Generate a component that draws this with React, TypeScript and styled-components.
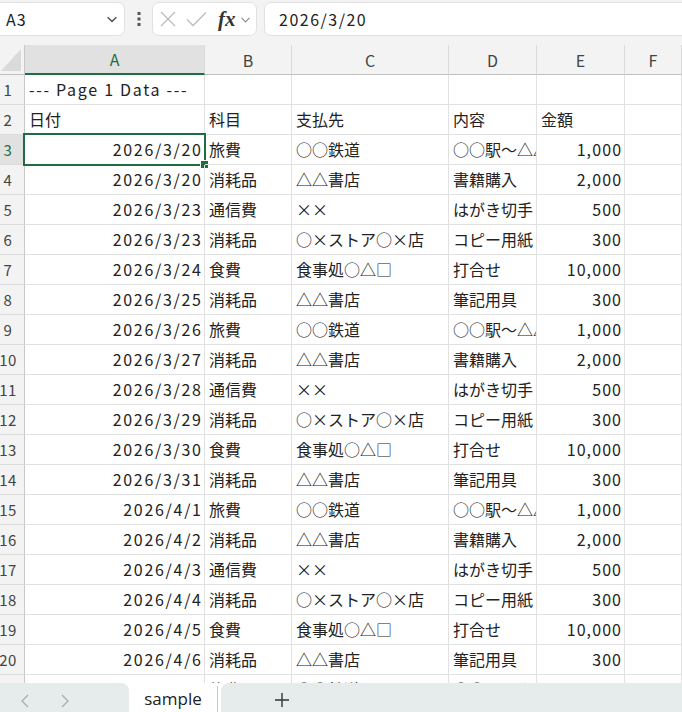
import styled, { createGlobalStyle } from "styled-components";

const GlobalStyle = createGlobalStyle`
  body {
    margin: 0;
    background: #fff;
    font-family: "Noto Sans CJK JP", "Noto Sans", sans-serif;
  }
  * { box-sizing: border-box; }
`;

const GREEN = "#1e6e43";

const Page = styled.div`
  width: 682px;
  height: 712px;
  overflow: hidden;
  display: flex;
  flex-direction: column;
  background: #fff;
`;

const Toolbar = styled.div`
  height: 45px;
  flex: none;
  background: #f3f3f3;
  display: flex;
  align-items: flex-start;
  padding-top: 2px;
`;

const NameBox = styled.div`
  margin-left: -8px;
  width: 133px;
  height: 34px;
  background: #fff;
  border: 1px solid #e1e1e1;
  border-radius: 7px;
  display: flex;
  align-items: center;
  justify-content: space-between;
  padding: 0 6px 0 13px;
  font-size: 16px;
  letter-spacing: 1px;
  color: #222;
`;

const Dots = styled.div`
  width: 27px;
  height: 34px;
  display: flex;
  align-items: center;
  justify-content: center;
`;

const FxBox = styled.div`
  width: 105px;
  height: 34px;
  background: #fff;
  border: 1px solid #e1e1e1;
  border-radius: 7px;
  display: flex;
  align-items: center;
  padding-left: 7px;
  gap: 10px;
`;

const FxLabel = styled.span`
  font-family: "Liberation Serif", "DejaVu Serif", serif;
  font-style: italic;
  font-weight: bold;
  font-size: 21px;
  color: #333;
  margin-left: 1px;
  margin-right: -6px;
`;

const FormulaInput = styled.div`
  margin-left: 7px;
  margin-right: -10px;
  flex: 1;
  height: 34px;
  background: #fff;
  border: 1px solid #e1e1e1;
  border-radius: 7px;
  display: flex;
  align-items: center;
  padding-left: 14px;
  font-size: 16px;
  letter-spacing: 1.5px;
  color: #222;
`;

const GridArea = styled.div`
  flex: 1;
  overflow: hidden;
`;

const Grid = styled.div`
  display: grid;
  grid-template-columns: 25px 180px 87px 157px 88px 88px 57px;
  grid-auto-rows: 30px;
`;

const Corner = styled.div`
  background: #f3f3f3;
  border-right: 1px solid #c8c8c8;
  border-bottom: 1px solid #c0c0c0;
  display: flex;
  align-items: flex-end;
  justify-content: flex-end;
  padding: 0 3px 3px 0;
`;

const ColHead = styled.div<{ $active?: boolean }>`
  background: ${(p) => (p.$active ? "#e1e1e1" : "#f3f3f3")};
  border-right: 1px solid #dadada;
  border-bottom: ${(p) => (p.$active ? `2px solid ${GREEN}` : "1px solid #c0c0c0")};
  display: flex;
  align-items: center;
  justify-content: center;
  font-size: 16px;
  color: ${(p) => (p.$active ? GREEN : "#444")};
`;

const RowHead = styled.div<{ $active?: boolean }>`
  background: ${(p) => (p.$active ? "#e1e1e1" : "#f3f3f3")};
  border-right: 1px solid #c8c8c8;
  border-bottom: 1px solid #dcdcdc;
  display: flex;
  align-items: center;
  justify-content: center;
  padding-right: 8px;
  font-size: 15px;
  letter-spacing: 0.5px;
  color: ${(p) => (p.$active ? GREEN : "#444")};
  white-space: nowrap;
`;

type Kind = "text" | "latin" | "num";

const spacing: Record<Kind, number> = { text: 0, latin: 1.7, num: 1.1 };

const Cell = styled.div<{ $kind?: Kind; $right?: boolean }>`
  position: relative;
  border-right: 1px solid #e1e1e1;
  border-bottom: 1px solid #e1e1e1;
  display: flex;
  align-items: center;
  justify-content: ${(p) => (p.$right ? "flex-end" : "flex-start")};
  padding: 0 ${(p) => (p.$right ? 3 - spacing[p.$kind ?? "text"] : 3)}px 1px 4px;
  font-size: 16px;
  letter-spacing: ${(p) => spacing[p.$kind ?? "text"]}px;
  color: #222;
  white-space: nowrap;
  overflow: ${(p) => (p.$right || p.$kind === "latin" ? "visible" : "hidden")};
`;

const Selection = styled.div`
  position: absolute;
  left: -2px;
  top: -2px;
  right: -2px;
  bottom: -2px;
  border: 2px solid ${GREEN};
  pointer-events: none;
  &::after {
    content: "";
    position: absolute;
    right: -5px;
    bottom: -5px;
    width: 7px;
    height: 7px;
    background: ${GREEN};
    border: 1px solid #fff;
  }
`;

const TabBar = styled.div`
  height: 29px;
  flex: none;
  display: flex;
  background: #fff;
`;

const NavArea = styled.div`
  width: 129px;
  background: #e6ebeb;
  border-top-right-radius: 8px;
  display: flex;
  align-items: center;
  padding: 6px 0 0 20px;
  gap: 30px;
`;

const SheetTab = styled.div`
  width: 89px;
  border-right: 1px solid #c8c8c8;
  margin: 3px 0 0;
  display: flex;
  align-items: center;
  justify-content: center;
  font-family: "Open Sans", "Noto Sans", sans-serif;
  font-size: 17px;
  color: #222;
  padding-bottom: 2px;
`;

const AddArea = styled.div`
  flex: 1;
  margin-left: 3px;
  background: #e6ebeb;
  border-top-left-radius: 8px;
  display: flex;
  align-items: center;
  padding-left: 53px;
  padding-top: 5px;
`;

type Row = [string, string, string, string, string];

const rows: Row[] = [
  ["2026/3/20", "旅費", "○○鉄道", "○○駅～△△駅", "1,000"],
  ["2026/3/20", "消耗品", "△△書店", "書籍購入", "2,000"],
  ["2026/3/23", "通信費", "××", "はがき切手", "500"],
  ["2026/3/23", "消耗品", "○×ストア○×店", "コピー用紙", "300"],
  ["2026/3/24", "食費", "食事処○△□", "打合せ", "10,000"],
  ["2026/3/25", "消耗品", "△△書店", "筆記用具", "300"],
  ["2026/3/26", "旅費", "○○鉄道", "○○駅～△△駅", "1,000"],
  ["2026/3/27", "消耗品", "△△書店", "書籍購入", "2,000"],
  ["2026/3/28", "通信費", "××", "はがき切手", "500"],
  ["2026/3/29", "消耗品", "○×ストア○×店", "コピー用紙", "300"],
  ["2026/3/30", "食費", "食事処○△□", "打合せ", "10,000"],
  ["2026/3/31", "消耗品", "△△書店", "筆記用具", "300"],
  ["2026/4/1", "旅費", "○○鉄道", "○○駅～△△駅", "1,000"],
  ["2026/4/2", "消耗品", "△△書店", "書籍購入", "2,000"],
  ["2026/4/3", "通信費", "××", "はがき切手", "500"],
  ["2026/4/4", "消耗品", "○×ストア○×店", "コピー用紙", "300"],
  ["2026/4/5", "食費", "食事処○△□", "打合せ", "10,000"],
  ["2026/4/6", "消耗品", "△△書店", "筆記用具", "300"],
  ["2026/4/7", "旅費", "○○鉄道", "○○駅～△△駅", "1,000"],
];

const cols = ["A", "B", "C", "D", "E", "F"];

function Chevron({ size = 12, color = "#444" }: { size?: number; color?: string }) {
  return (
    <svg width={size} height={size} viewBox="0 0 12 12" fill="none">
      <path d="M2 4.5l4 4 4-4" stroke={color} strokeWidth={1.2} strokeLinecap="round" strokeLinejoin="round" />
    </svg>
  );
}

export default function App() {
  return (
    <Page>
      <GlobalStyle />
      <Toolbar>
        <NameBox>
          <span>A3</span>
          <Chevron />
        </NameBox>
        <Dots>
          <svg width="4" height="14" viewBox="0 0 4 14">
            <rect x="0.5" y="0" width="3" height="3" fill="#555" />
            <rect x="0.5" y="5.5" width="3" height="3" fill="#555" />
            <rect x="0.5" y="11" width="3" height="3" fill="#555" />
          </svg>
        </Dots>
        <FxBox>
          <svg width="16" height="16" viewBox="0 0 16 16" fill="none">
            <path d="M1 1l14 14M15 1L1 15" stroke="#bcbcbc" strokeWidth={1.3} />
          </svg>
          <svg width="21" height="16" viewBox="0 0 21 16" fill="none">
            <path d="M1 8.5l6 6L20 1.5" stroke="#bcbcbc" strokeWidth={1.3} />
          </svg>
          <FxLabel>fx</FxLabel>
          <Chevron size={11} color="#888" />
        </FxBox>
        <FormulaInput>2026/3/20</FormulaInput>
      </Toolbar>
      <GridArea>
        <Grid>
          <Corner>
            <svg width="20" height="22" viewBox="0 0 20 22">
              <path d="M20 0L20 22L0 22Z" fill="#dadada" />
            </svg>
          </Corner>
          {cols.map((c) => (
            <ColHead key={c} $active={c === "A"}>
              {c}
            </ColHead>
          ))}
          <RowHead>1</RowHead>
          <Cell $kind="latin">--- Page 1 Data ---</Cell>
          <Cell />
          <Cell />
          <Cell />
          <Cell />
          <Cell />
          <RowHead>2</RowHead>
          <Cell>日付</Cell>
          <Cell>科目</Cell>
          <Cell>支払先</Cell>
          <Cell>内容</Cell>
          <Cell>金額</Cell>
          <Cell />
          {rows.map((r, i) => {
            const n = i + 3;
            return [
              <RowHead key={`h${n}`} $active={n === 3}>
                {n}
              </RowHead>,
              <Cell key={`a${n}`} $kind="latin" $right>
                {r[0]}
                {n === 3 && <Selection />}
              </Cell>,
              <Cell key={`b${n}`}>{r[1]}</Cell>,
              <Cell key={`c${n}`}>{r[2]}</Cell>,
              <Cell key={`d${n}`}>{r[3]}</Cell>,
              <Cell key={`e${n}`} $kind="num" $right>
                {r[4]}
              </Cell>,
              <Cell key={`f${n}`} />,
            ];
          })}
        </Grid>
      </GridArea>
      <TabBar>
        <NavArea>
          <svg width="10" height="16" viewBox="0 0 10 16" fill="none">
            <path d="M8 2L2 8l6 6" stroke="#a8acac" strokeWidth={1.3} />
          </svg>
          <svg width="10" height="16" viewBox="0 0 10 16" fill="none">
            <path d="M2 2l6 6-6 6" stroke="#a8acac" strokeWidth={1.3} />
          </svg>
        </NavArea>
        <SheetTab>sample</SheetTab>
        <AddArea>
          <svg width="16" height="16" viewBox="0 0 16 16" fill="none">
            <path d="M8 1v14M1 8h14" stroke="#333" strokeWidth={1.4} />
          </svg>
        </AddArea>
      </TabBar>
    </Page>
  );
}
